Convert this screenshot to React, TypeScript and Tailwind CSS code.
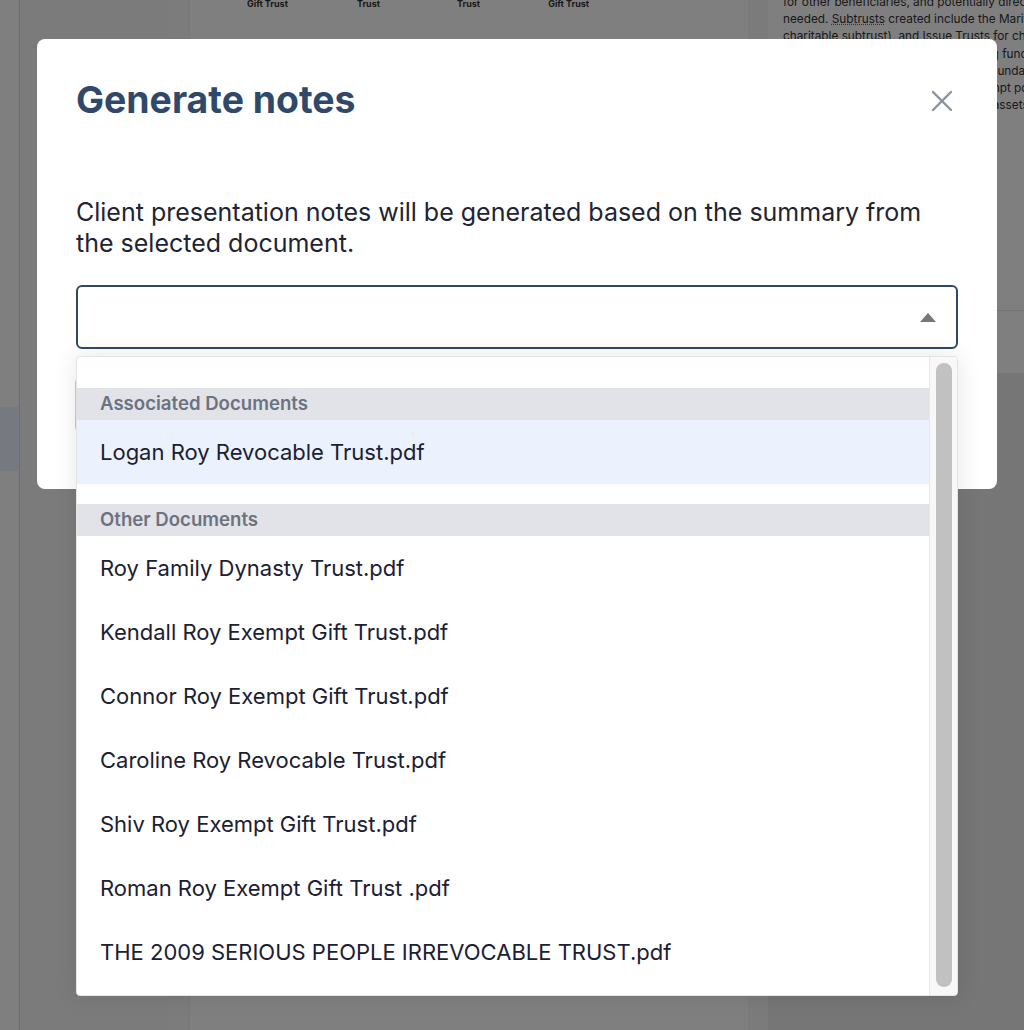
import { X } from "lucide-react";

const associated = ["Logan Roy Revocable Trust.pdf"];

const others = [
  "Roy Family Dynasty Trust.pdf",
  "Kendall Roy Exempt Gift Trust.pdf",
  "Connor Roy Exempt Gift Trust.pdf",
  "Caroline Roy Revocable Trust.pdf",
  "Shiv Roy Exempt Gift Trust.pdf",
  "Roman Roy Exempt Gift Trust .pdf",
  "THE 2009 SERIOUS PEOPLE IRREVOCABLE TRUST.pdf",
];

const summaryLines = [
  "for other beneficiaries, and potentially directing distributions as",
  <>
    needed. <span className="underline decoration-dotted decoration-red-500">Subtrusts</span> created include the Marital Trust (with a
  </>,
  "charitable subtrust), and Issue Trusts for children and grandchildren.",
  "the Family Trusts to hold the remaining funds for the issue of the grantor",
  "with any residue passing to the Roy Foundation, a private foundation",
  "of the trust estates, including the exempt portion held in further trust",
  "in separate shares, with all remaining assets distributed outright.",
];

const GroupHeader = ({ label }: { label: string }) => (
  <div className="h-[32px] flex items-center pl-[23px] bg-[#e2e3e8] text-[18.6px] font-semibold text-[#6b7280]">
    {label}
  </div>
);

const Option = ({ label, active }: { label: string; active?: boolean }) => (
  <div
    className={`h-[64px] flex items-center pl-[23px] text-[22px] text-[#1b2032] ${
      active ? "bg-[#ebf2fe]" : "bg-white"
    }`}
  >
    {label}
  </div>
);

export default function App() {
  return (
    <div className="relative w-[1024px] h-[1030px] overflow-hidden bg-white font-['Inter',sans-serif]">
      {/* app behind the dialog */}
      <div className="flex h-full">
        <aside className="w-[20px] shrink-0 border-r border-[#dcdcdc] bg-white pt-[407px]">
          <div className="h-[64px] bg-[#ecf3ff]" />
        </aside>
        <div className="w-[148px] shrink-0 bg-[#f6f6f6]" />
        <div className="w-[22px] shrink-0 bg-[#f8f8f8] border-r border-[#f0f0f0]" />
        <div className="w-[558px] shrink-0 bg-white">
          <div className="flex text-[9px] font-bold text-[#333] leading-none -mt-[1px]">
            <span className="ml-[57px]">Gift Trust</span>
            <span className="ml-[69px]">Trust</span>
            <span className="ml-[77px]">Trust</span>
            <span className="ml-[68px]">Gift Trust</span>
          </div>
        </div>
        <div className="w-[20px] shrink-0 bg-[#f6f6f6]" />
        <div className="flex-1 bg-white flex flex-col">
          <div className="h-[317px] border-b border-[#e6e6e6] pl-[15px] -mt-[6px] overflow-hidden">
            {summaryLines.map((line, i) => (
              <div key={i} className="whitespace-nowrap text-[11.8px] leading-[17.2px] text-[#333]">
                {line}
              </div>
            ))}
          </div>
          <div className="h-[62px] bg-white" />
          <div className="flex-1 bg-[#ececec]" />
        </div>
      </div>

      {/* backdrop */}
      <div className="absolute inset-0 bg-black/50" />

      {/* dialog */}
      <div className="absolute left-[37px] top-[39px] w-[960px] h-[450px] rounded-lg bg-white px-[39px] pt-[41px]">
        <div className="flex items-start justify-between">
          <h2 className="text-[37.4px] leading-[40px] font-bold text-[#30496b]">Generate notes</h2>
          <button className="mt-[3px] -mr-[2px] text-[#8a939f]">
            <X size={36} strokeWidth={1.6} />
          </button>
        </div>
        <p className="mt-[77px] max-w-[860px] text-[25px] leading-[31px] text-[#1f2433]">
          Client presentation notes will be generated based on the summary from the selected document.
        </p>
        <div className="mt-[26px] h-[64px] rounded-md border-2 border-[#2f4866] flex items-center justify-end pr-[20px]">
          <svg width="16" height="9" viewBox="0 0 16 9">
            <path d="M8 0 L16 9 L0 9 Z" fill="#777" />
          </svg>
        </div>
        <div className="mt-[28px] -ml-[1px] h-[56px] w-[160px] rounded-md border border-[#c9ccd1] flex items-center justify-center text-[18px] text-[#30496b]">
          Generate
        </div>
      </div>

      {/* open listbox */}
      <div className="absolute left-[76px] top-[356px] w-[882px] h-[640px] rounded bg-white border border-[#e4e4e6] shadow-[0_0_24px_rgba(0,0,0,0.10)] flex overflow-hidden">
        <div className="flex-1 flex flex-col">
          <div className="h-[31px]" />
          <GroupHeader label="Associated Documents" />
          {associated.map((d) => (
            <Option key={d} label={d} active />
          ))}
          <div className="h-[20px]" />
          <GroupHeader label="Other Documents" />
          {others.map((d) => (
            <Option key={d} label={d} />
          ))}
        </div>
        <div className="w-[28px] shrink-0 bg-[#f8f8f8] border-l border-[#e8e8e8] flex justify-center pt-[6px] pb-[8px]">
          <div className="w-[16px] h-full rounded-full bg-[#c1c1c1]" />
        </div>
      </div>
    </div>
  );
}
